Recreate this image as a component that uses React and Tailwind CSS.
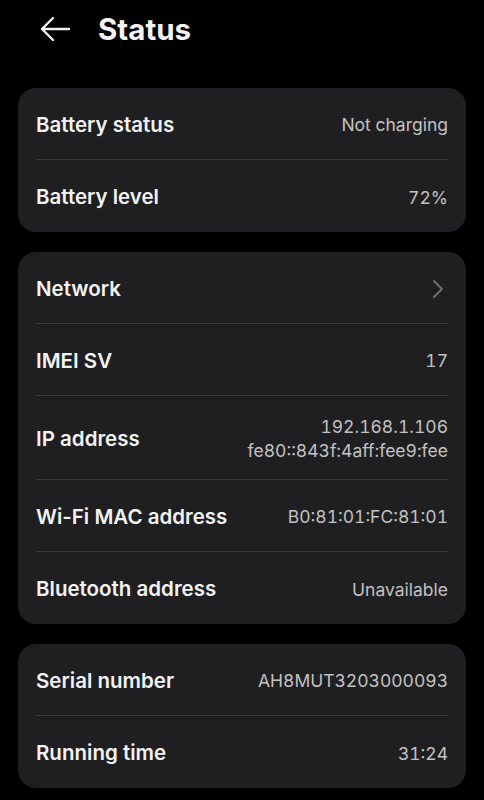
import React from 'react';

function Row({ label, value, chevron, last, tall }) {
  return (
    <div className={`flex items-center justify-between pt-[3px] ${tall ? 'h-[84px]' : 'h-[72px]'} ${last ? '' : 'border-b border-[#3a3a3c]'}`}>
      <span className="text-[20.5px] font-semibold text-[#f2f2f2]">{label}</span>
      {chevron ? (
        <svg width="12" height="20" viewBox="0 0 12 20" fill="none" className="mr-[4px]">
          <path d="M2 2l8 8-8 8" stroke="#6e6e70" strokeWidth="2" strokeLinecap="round" strokeLinejoin="round" />
        </svg>
      ) : (
        <span className="text-[17.5px] tabular-nums text-[#c2c2c2] text-right leading-[24px]">{value}</span>
      )}
    </div>
  );
}

function Card({ children }) {
  return <div className="mx-[18px] rounded-[18px] bg-[#1f1f21] px-[18px]">{children}</div>;
}

export default function App() {
  return (
    <div className="min-h-screen w-full bg-black pb-4" style={{ fontFamily: 'Inter, "Noto Sans", sans-serif' }}>
      <div className="flex items-center h-[58px] pl-[38px]">
        <svg width="34" height="28" viewBox="0 0 34 28" fill="none">
          <path d="M31 14H4M15 3L4 14l11 11" stroke="#f2f2f2" strokeWidth="2.4" strokeLinecap="round" strokeLinejoin="round" />
        </svg>
        <h1 className="ml-[26px] text-[29.5px] font-bold text-[#f2f2f2]">Status</h1>
      </div>
      <div className="mt-[30px] flex flex-col gap-[20px]">
        <Card>
          <Row label="Battery status" value="Not charging" />
          <Row label="Battery level" value="72%" last />
        </Card>
        <Card>
          <Row label="Network" chevron />
          <Row label="IMEI SV" value="17" />
          <Row label="IP address" value={<>192.168.1.106<br />fe80::843f:4aff:fee9:fee</>} tall />
          <Row label="Wi-Fi MAC address" value="B0:81:01:FC:81:01" />
          <Row label="Bluetooth address" value="Unavailable" last />
        </Card>
        <Card>
          <Row label="Serial number" value="AH8MUT3203000093" />
          <Row label="Running time" value="31:24" last />
        </Card>
      </div>
    </div>
  );
}
